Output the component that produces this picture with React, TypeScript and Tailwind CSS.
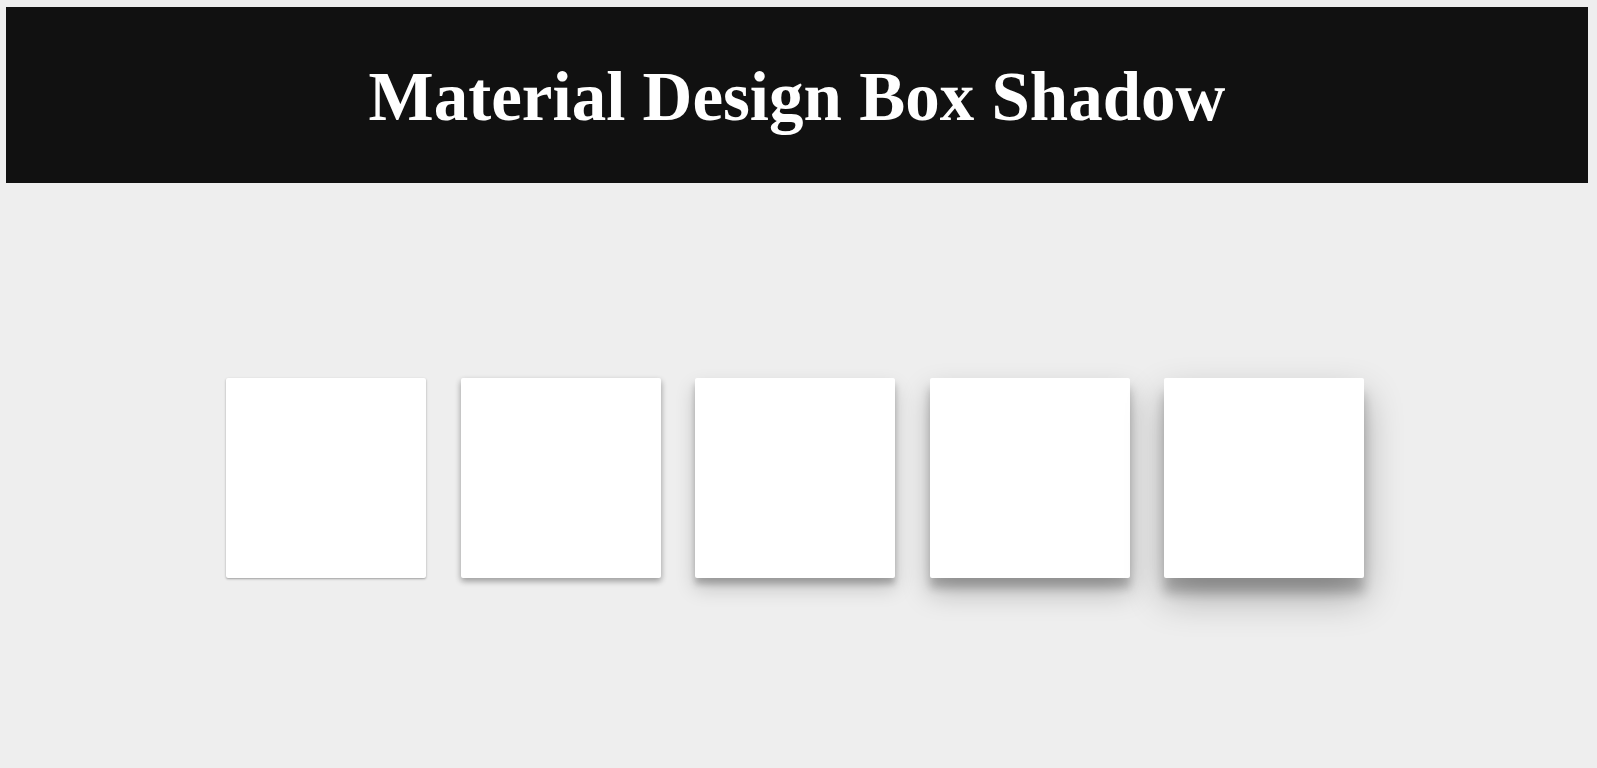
export default function App() {
  return (
    <div className="min-h-[768px] bg-[#eeeeee] pt-[7px] pb-[1px]">
      <header className="ml-[6px] mr-[9px] flex h-[176px] items-center justify-center bg-[#111111]">
        <h1
          className="mt-[4px] text-[69px] font-bold leading-none text-white"
          style={{ fontFamily: '"Liberation Serif", "Times New Roman", serif' }}
        >
          Material Design Box Shadow
        </h1>
      </header>
      <main className="mt-[195px] flex justify-center gap-[34.5px] pr-[7px]">
        <div className="h-[200px] w-[200px] rounded-[2px] bg-white shadow-[0_1px_3px_rgba(0,0,0,0.12),0_1px_2px_rgba(0,0,0,0.24)]" />
        <div className="h-[200px] w-[200px] rounded-[2px] bg-white shadow-[0_3px_6px_rgba(0,0,0,0.16),0_3px_6px_rgba(0,0,0,0.23)]" />
        <div className="h-[200px] w-[200px] rounded-[2px] bg-white shadow-[0_10px_20px_rgba(0,0,0,0.19),0_6px_6px_rgba(0,0,0,0.23)]" />
        <div className="h-[200px] w-[200px] rounded-[2px] bg-white shadow-[0_14px_28px_rgba(0,0,0,0.25),0_10px_10px_rgba(0,0,0,0.22)]" />
        <div className="h-[200px] w-[200px] rounded-[2px] bg-white shadow-[0_19px_38px_rgba(0,0,0,0.30),0_15px_12px_rgba(0,0,0,0.22)]" />
      </main>
    </div>
  );
}
